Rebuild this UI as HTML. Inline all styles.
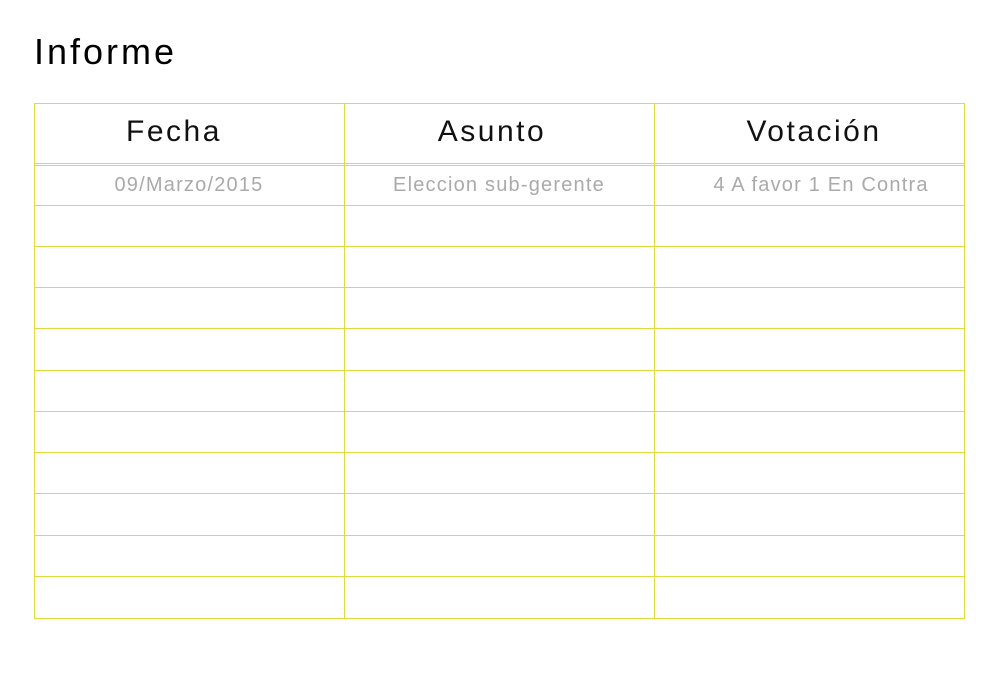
<!DOCTYPE html>
<html><head><meta charset="utf-8"><style>
body{margin:0;width:1000px;height:700px;background:#fff;position:relative;overflow:hidden;font-family:"Liberation Sans",sans-serif}
.t{position:absolute;left:34px;top:31px;font-size:36px;color:#000;letter-spacing:3px}
.h{position:absolute;background:#dcdc3c;height:1px;left:34px;width:931px}
.v{position:absolute;background:#dcdc3c;width:1px;top:103px;height:516px}
.c{position:absolute;text-align:center;width:310px}
.hd{font-size:30px;top:115px;color:#111;letter-spacing:2.5px}
.d{font-size:20px;top:174px;color:#aaa;letter-spacing:1.2px}
</style></head><body>
<div class="t">Informe</div>
<div class="h" style="top:103px"></div>
<div class="h" style="top:163px"></div>
<div class="h" style="top:165px"></div>
<div class="h" style="top:205px"></div>
<div class="h" style="top:246px"></div>
<div class="h" style="top:287px"></div>
<div class="h" style="top:328px"></div>
<div class="h" style="top:370px"></div>
<div class="h" style="top:411px"></div>
<div class="h" style="top:452px"></div>
<div class="h" style="top:493px"></div>
<div class="h" style="top:535px"></div>
<div class="h" style="top:576px"></div>
<div class="h" style="top:618px"></div>
<div class="v" style="left:34px"></div>
<div class="v" style="left:344px"></div>
<div class="v" style="left:654px"></div>
<div class="v" style="left:964px"></div>
<div class="c hd" style="left:19px">Fecha</div>
<div class="c hd" style="left:337px">Asunto</div>
<div class="c hd" style="left:659px">Votación</div>
<div class="c d" style="left:34px">09/Marzo/2015</div>
<div class="c d" style="left:344px">Eleccion sub-gerente</div>
<div class="c d" style="left:666px">4 A favor 1 En Contra</div>
</body></html>
